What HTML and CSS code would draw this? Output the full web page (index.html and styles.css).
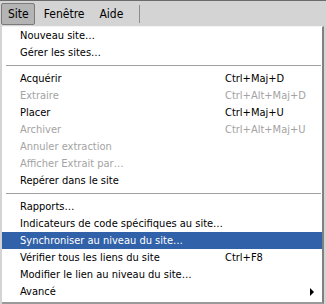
FILE: index.html
```html
<!DOCTYPE html>
<html lang="fr">
<head>
    <meta charset="UTF-8">
    <title>Menu Site</title>
    <link rel="stylesheet" href="styles.css">
</head>
<body>
    <div class="menubar">
        <span class="menu-title active">Site</span>
        <span class="menu-title">Fenêtre</span>
        <span class="menu-title">Aide</span>
        <span class="bar-sep"></span>
    </div>
    <div class="dropdown">
        <div class="item"><span>Nouveau site…</span></div>
        <div class="item"><span>Gérer les sites…</span></div>
        <div class="sep"></div>
        <div class="item"><span>Acquérir</span><span class="key">Ctrl+Maj+D</span></div>
        <div class="item disabled"><span>Extraire</span><span class="key">Ctrl+Alt+Maj+D</span></div>
        <div class="item"><span>Placer</span><span class="key">Ctrl+Maj+U</span></div>
        <div class="item disabled"><span>Archiver</span><span class="key">Ctrl+Alt+Maj+U</span></div>
        <div class="item disabled"><span>Annuler extraction</span></div>
        <div class="item disabled"><span>Afficher Extrait par…</span></div>
        <div class="item"><span>Repérer dans le site</span></div>
        <div class="sep"></div>
        <div class="item"><span>Rapports…</span></div>
        <div class="item"><span>Indicateurs de code spécifiques au site…</span></div>
        <div class="item selected"><span>Synchroniser au niveau du site…</span></div>
        <div class="item"><span>Vérifier tous les liens du site</span><span class="key">Ctrl+F8</span></div>
        <div class="item"><span>Modifier le lien au niveau du site…</span></div>
        <div class="item"><span>Avancé</span><span class="arrow"></span></div>
    </div>
</body>
</html>
```

FILE: styles.css
```css
body {
    margin: 0;
    font-family: Tahoma, "DejaVu Sans Condensed", "Liberation Sans", sans-serif;
    font-size: 11px;
    color: #000;
    background-color: #d4d4d4;
    border-top: 1px solid #6b6b6b;
}

.menubar {
    display: flex;
    align-items: center;
    height: 25px;
    padding-left: 1px;
}

.menu-title {
    display: flex;
    align-items: center;
    height: 14px;
    padding: 3px 5px 3px 6px;
    margin-right: 2px;
    font-size: 12px;
    border: 1px solid transparent;
}

.menu-title.active {
    background-color: #b4b4b4;
    border-color: #7a7a7a;
    border-radius: 2px;
}

.bar-sep {
    width: 1px;
    height: 18px;
    margin-left: 8px;
    background-color: #8c8c8c;
}

.dropdown {
    margin-left: 2px;
    width: 320px;
    background-color: #fff;
    border-top: 1px solid #f4f4f4;
    border-right: 2px solid #808080;
    border-bottom: 2px solid #9a9a9a;
    padding: 0 0 2px;
}

.item {
    display: flex;
    align-items: center;
    justify-content: space-between;
    height: 17px;
    padding: 0 12px 0 18px;
}

.item .key {
    width: 85px;
}

.disabled {
    color: #a3a3a3;
}

.selected {
    background-color: #3161a8;
    color: #fff;
}

.sep {
    height: 1px;
    margin: 4px 1px 4px 4px;
    background-color: #a0a0a0;
}

.arrow {
    width: 0;
    height: 0;
    margin-right: -4px;
    border-top: 4px solid transparent;
    border-bottom: 4px solid transparent;
    border-left: 4px solid #000;
}
```
